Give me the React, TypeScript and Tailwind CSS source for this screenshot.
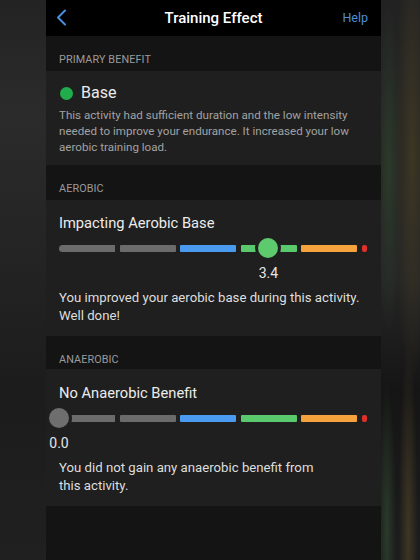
import React from 'react';

type Bar = { color: string };

const segments: Bar[] = [
  { color: 'bg-[#6b6b6b]' },
  { color: 'bg-[#6b6b6b]' },
  { color: 'bg-[#4a9bf0]' },
  { color: 'bg-[#5ac86c]' },
  { color: 'bg-[#f5a23c]' },
];

// 0.0 – 5.0 spread over the 308px track
const TRACK = 308;

const EffectScale: React.FC<{ value: number; knob: string }> = ({ value, knob }) => {
  const x = (value / 5) * TRACK;
  return (
    <div>
      <div className="relative h-5 flex items-center">
        <div className="flex items-center gap-[4.5px]">
          {segments.map((s, i) => (
            <div key={i} className={`h-[7px] w-[56px] rounded-[1px] ${s.color} ${i === 0 ? 'rounded-l-full' : ''}`} />
          ))}
          <div className="h-[7px] w-[5.5px] rounded-[2px] bg-[#e0302c]" />
        </div>
        <div
          className={`absolute top-1/2 h-[20px] w-[20px] -translate-x-1/2 -translate-y-1/2 rounded-full ring-[3px] ring-[#1f1f1f] ${knob}`}
          style={{ left: x }}
        />
      </div>
      <div className="relative mt-[7px] h-4">
        <span className="absolute -translate-x-1/2 text-[14px] leading-4 text-[#e6e6e6]" style={{ left: x }}>
          {value.toFixed(1)}
        </span>
      </div>
    </div>
  );
};

const SectionLabel: React.FC<{ children: React.ReactNode; pb?: string }> = ({ children, pb = 'pb-[4px]' }) => (
  <div className={`bg-[#141414] pl-[13px] pt-[17px] ${pb} text-[10.8px] leading-[14px] tracking-[0.1px] text-[#9b9b9b]`}>
    {children}
  </div>
);

export default function App() {
  return (
    <div className="flex h-[560px] w-[420px] overflow-hidden bg-[#1b1b1b] font-['Roboto',sans-serif]">
      {/* blurred backdrop, left */}
      <div className="w-[46px] shrink-0 bg-[linear-gradient(180deg,#232323_0%,#2b2b2b_20%,#242424_45%,#1c1c1c_70%,#202020_100%)]" />

      {/* phone screen */}
      <div className="flex w-[335px] shrink-0 flex-col bg-[#141414]">
        <div className="relative flex h-9 items-center justify-center bg-black">
          <svg className="absolute left-[10px] top-[9px]" width="11" height="17" viewBox="0 0 11 17" fill="none">
            <polyline points="9,1.5 2,8.5 9,15.5" stroke="#4a8fe0" strokeWidth="2" strokeLinecap="round" strokeLinejoin="round" />
          </svg>
          <span className="text-[15px] font-medium text-white">Training Effect</span>
          <span className="absolute right-[13px] text-[12.5px] text-[#4a8fd8]">Help</span>
        </div>

        <SectionLabel>PRIMARY BENEFIT</SectionLabel>
        <div className="bg-[#1f1f1f] pl-[13px] pr-[14px] pt-[11px] pb-[10px]">
          <div className="flex items-center gap-[8px]">
            <span className="ml-[1px] h-[13px] w-[13px] rounded-full bg-[#22ad4c]" />
            <span className="text-[16px] leading-[22px] text-[#ececec]">Base</span>
          </div>
          <p className="mt-[3px] whitespace-nowrap text-[11.6px] leading-4 text-[#a2a2a2]">
            This activity had sufficient duration and the low intensity
            <br />
            needed to improve your endurance. It increased your low
            <br />
            aerobic training load.
          </p>
        </div>

        <SectionLabel>AEROBIC</SectionLabel>
        <div className="bg-[#1f1f1f] pl-[13px] pr-[14px] pt-[12px] pb-[11px]">
          <div className="text-[14.7px] leading-[22px] text-[#ececec]">Impacting Aerobic Base</div>
          <div className="mt-[4px]">
            <EffectScale value={3.4} knob="bg-[#5cca6d]" />
          </div>
          <p className="mt-[8px] whitespace-nowrap text-[13.2px] leading-[18px] text-[#dedede]">
            You improved your aerobic base during this activity.
            <br />
            Well done!
          </p>
        </div>

        <SectionLabel pb="pb-[2px]">ANAEROBIC</SectionLabel>
        <div className="bg-[#1f1f1f] pl-[13px] pr-[14px] pt-[13px] pb-[11px]">
          <div className="text-[14.7px] leading-[22px] text-[#ececec]">No Anaerobic Benefit</div>
          <div className="mt-[4px]">
            <EffectScale value={0} knob="bg-[#6e6e6e]" />
          </div>
          <p className="mt-[8px] whitespace-nowrap text-[13.2px] leading-[18px] text-[#dedede]">
            You did not gain any anaerobic benefit from
            <br />
            this activity.
          </p>
        </div>

        <div className="flex-1 bg-[#141414]" />
      </div>

      {/* blurred backdrop, right */}
      <div className="flex-1 bg-[radial-gradient(ellipse_at_80%_28%,#3d3624_0%,transparent_40%),radial-gradient(ellipse_at_20%_30%,#2c3a2a_0%,transparent_30%),radial-gradient(ellipse_at_70%_95%,#3e3624_0%,transparent_25%),radial-gradient(ellipse_at_15%_95%,#2a3a29_0%,transparent_20%),linear-gradient(180deg,#222_0%,#252525_50%,#151515_70%,#1d1d1d_100%)]" />
    </div>
  );
}
